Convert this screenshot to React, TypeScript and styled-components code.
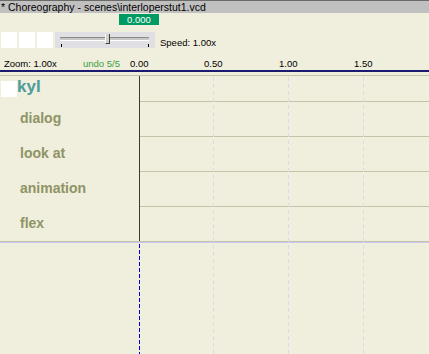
import styled, { createGlobalStyle } from 'styled-components'

const GlobalStyle = createGlobalStyle`
    html, body {
        margin: 0;
        padding: 0;
        background: #f0eedc;
    }
`

const channels = ['dialog', 'look at', 'animation', 'flex']
const ticks = [
    { label: '0.00', x: 139 },
    { label: '0.50', x: 213 },
    { label: '1.00', x: 288 },
    { label: '1.50', x: 363 },
]

const App = () => {
    return (
        <Window>
            <GlobalStyle />
            <TitleBar>* Choreography - scenes\interloperstut1.vcd</TitleBar>
            <TimeRow>
                <TimeBox>0.000</TimeBox>
            </TimeRow>
            <Controls>
                <Square />
                <Square />
                <Square />
                <Slider>
                    <Track />
                    <Thumb />
                    <Tick $left={6} />
                    <Tick $left={93} />
                </Slider>
                <SpeedLabel>Speed: 1.00x</SpeedLabel>
            </Controls>
            <Ruler>
                <ZoomLabel>Zoom: 1.00x</ZoomLabel>
                <UndoLabel>undo 5/5</UndoLabel>
                {ticks.map(t => (
                    <TickLabel key={t.label} style={{ left: t.x - 9 }}>{t.label}</TickLabel>
                ))}
            </Ruler>
            <Body>
                {ticks.slice(1).map(t => (
                    <GridLine key={t.label} style={{ left: t.x }} />
                ))}
                <Tracks>
                    <ActorRow>
                        <ActorBox />
                        <ActorName>kyl</ActorName>
                    </ActorRow>
                    {channels.map(c => (
                        <ChannelRow key={c}>
                            <ChannelName>{c}</ChannelName>
                            <ChannelLane />
                        </ChannelRow>
                    ))}
                </Tracks>
                <Empty>
                    <Cursor />
                </Empty>
            </Body>
        </Window>
    )
}

const Window = styled.div`
    width: 429px;
    height: 354px;
    overflow: hidden;
    background: #f0eedc;
    font-family: "Liberation Sans", Arial, sans-serif;
    display: flex;
    flex-direction: column;
`

const TitleBar = styled.div`
    height: 12px;
    border-top: 1px solid #6a6a66;
    background: #c0c0c0;
    color: #000;
    font-size: 10.5px;
    line-height: 12px;
    padding-left: 1px;
    white-space: nowrap;
`

const TimeRow = styled.div`
    height: 11px;
    margin-top: 1px;
    padding-left: 119px;
    display: flex;
`

const TimeBox = styled.div`
    width: 40px;
    height: 11px;
    background: #009a62;
    color: #fff;
    font-size: 9.5px;
    line-height: 11px;
    text-align: center;
`

const Controls = styled.div`
    margin-top: 7px;
    height: 16px;
    padding-left: 1px;
    display: flex;
    align-items: center;
    gap: 2px;
`

const Square = styled.div`
    width: 16px;
    height: 16px;
    background: #fff;
`

const Slider = styled.div`
    position: relative;
    width: 100px;
    height: 16px;
    background: #e0dfe3;
`

const Track = styled.div`
    position: absolute;
    left: 5px;
    right: 6px;
    top: 5px;
    height: 2px;
    border-top: 1px solid #8a8a8a;
    border-bottom: 1px solid #fff;
    background: #c8c8c8;
`

const Thumb = styled.div`
    position: absolute;
    left: 50px;
    top: 2px;
    width: 3px;
    height: 9px;
    background: #d4d0c8;
    border-left: 1px solid #fff;
    border-right: 1px solid #404040;
    border-bottom: 1px solid #404040;
`

const Tick = styled.div<{ $left: number }>`
    position: absolute;
    left: ${p => p.$left}px;
    bottom: 1px;
    width: 1px;
    height: 3px;
    background: #000;
`

const SpeedLabel = styled.div`
    margin-left: 3px;
    font-size: 9.5px;
    padding-top: 4px;
    color: #000;
`

const Ruler = styled.div`
    position: relative;
    margin-top: 9px;
    height: 13px;
    border-bottom: 2px solid #1a1a6e;
    font-size: 9.5px;
    line-height: 13px;
`

const ZoomLabel = styled.span`
    position: absolute;
    left: 4px;
    color: #000;
`

const UndoLabel = styled.span`
    position: absolute;
    left: 83px;
    color: #3aa040;
`

const TickLabel = styled.span`
    position: absolute;
    color: #000;
`

const Body = styled.div`
    position: relative;
    flex: 1;
    margin-top: 3px;
    border-top: 1px solid #c4c2a8;
    display: flex;
    flex-direction: column;
`

const GridLine = styled.div`
    position: absolute;
    top: 1px;
    bottom: 0;
    width: 1px;
    background: repeating-linear-gradient(to bottom, #dcdae8 0 4px, transparent 4px 7px);
`

const Tracks = styled.div`
    display: flex;
    flex-direction: column;
    border-bottom: 1px solid #c4c2a8;
`

const ActorRow = styled.div`
    height: 25px;
    display: flex;
    align-items: center;
    padding-left: 1px;
    width: 138px;
    border-right: 1px solid #3c3a34;
`

const ActorBox = styled.div`
    width: 16px;
    height: 16px;
    background: #fff;
`

const ActorName = styled.span`
    font-size: 17px;
    font-weight: bold;
    color: #4e9c9c;
    margin-top: -3px;
`

const ChannelRow = styled.div`
    height: 35px;
    display: flex;
`

const ChannelName = styled.div`
    width: 119px;
    padding-left: 20px;
    border-right: 1px solid #3c3a34;
    font-size: 14px;
    font-weight: bold;
    color: #8e9466;
    line-height: 34px;
`

const ChannelLane = styled.div`
    flex: 1;
    border-top: 1px solid #c4c2a8;
`

const Empty = styled.div`
    flex: 1;
    border-top: 1px solid #c8c8f4;
    padding-left: 139px;
    display: flex;
`

const Cursor = styled.div`
    width: 1px;
    margin-top: 1px;
    background: repeating-linear-gradient(to bottom, #0000e0 0 4px, transparent 4px 6px);
`

export default App
